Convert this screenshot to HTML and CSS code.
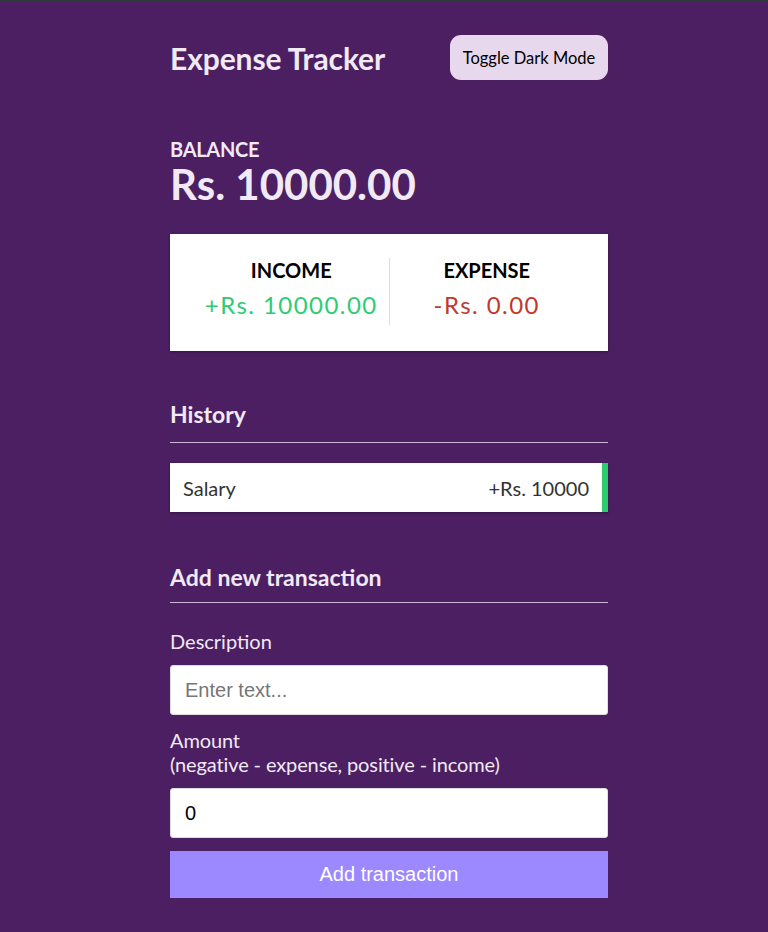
FILE: index.html
```html
<!DOCTYPE html>
<html lang="en">
<head>
<meta charset="UTF-8">
<title>Expense Tracker</title>
<link rel="stylesheet" href="styles.css">
</head>
<body>
<div class="container">
  <header class="header">
    <h2 class="title">Expense Tracker</h2>
    <button class="toggle">Toggle Dark Mode</button>
  </header>

  <h4 class="balance-label">BALANCE</h4>
  <h1 class="balance">Rs. 10000.00</h1>

  <div class="inc-exp">
    <div class="col col-left">
      <h4 class="col-title">INCOME</h4>
      <p class="money plus">+Rs. 10000.00</p>
    </div>
    <div class="col">
      <h4 class="col-title">EXPENSE</h4>
      <p class="money minus">-Rs. 0.00</p>
    </div>
  </div>

  <h3 class="section">History</h3>
  <ul class="list">
    <li class="item plus-item"><span>Salary</span><span>+Rs. 10000</span></li>
  </ul>

  <h3 class="section section-add">Add new transaction</h3>
  <form class="form">
    <div class="form-control">
      <label class="label" for="text">Description</label>
      <input class="input" type="text" id="text" placeholder="Enter text...">
    </div>
    <div class="form-control">
      <label class="label label-amount" for="amount">Amount <br>(negative - expense, positive - income)</label>
      <input class="input" type="number" id="amount" value="0">
    </div>
    <button class="btn" type="button">Add transaction</button>
  </form>
</div>
</body>
</html>
```

FILE: styles.css
```css
* {
  box-sizing: border-box;
}

body {
  margin: 0;
  padding-left: 10px;
  background: #4b1f62;
  border-top: 2px solid #2f3838;
  font-family: Lato, "Open Sans", sans-serif;
  color: #f1e9f4;
  min-height: 932px;
}

.container {
  width: 438px;
  margin: 0 auto;
  padding-top: 33px;
}

.header {
  display: flex;
  justify-content: space-between;
  align-items: center;
  height: 45px;
}

.title {
  margin: 0;
  font-size: 30px;
  font-weight: 700;
  line-height: normal;
  letter-spacing: -0.1px;
}

.toggle {
  height: 45px;
  width: 158px;
  border: none;
  border-radius: 11px;
  background: #e7d8ee;
  color: #000;
  font-family: Lato, sans-serif;
  font-size: 16.5px;
  padding: 0;
}

.balance-label {
  margin: 57px 0 0;
  font-size: 20px;
  line-height: 24px;
  font-weight: 700;
  letter-spacing: -0.3px;
}

.balance {
  margin: 0;
  font-size: 42px;
  line-height: 46px;
  font-weight: 700;
}

.inc-exp {
  margin-top: 27px;
  background: #fff;
  box-shadow: 0 1px 3px rgba(0, 0, 0, 0.12), 0 1px 2px rgba(0, 0, 0, 0.24);
  padding: 24px 24px 26px;
  display: flex;
}

.col {
  flex: 1;
  text-align: center;
  padding-bottom: 6px;
}

.col-left {
  border-right: 1px solid #dedede;
}

.col-title {
  margin: 0;
  color: #000;
  font-size: 20px;
  line-height: 24px;
  font-weight: 700;
}

.money {
  margin: 8px 0 0;
  font-size: 24px;
  line-height: normal;
  letter-spacing: 1.45px;
}

.plus {
  color: #2ecc71;
}

.minus {
  color: #c0392b;
}

.section {
  margin: 49px 0 0;
  font-size: 23px;
  font-weight: 700;
  line-height: normal;
  padding-bottom: 14px;
  border-bottom: 1px solid #cbb8d6;
}

.section-add {
  margin-top: 51px;
  padding-bottom: 11px;
}

.list {
  list-style: none;
  margin: 20px 0 0;
  padding: 0;
}

.item {
  background: #fff;
  color: #333;
  height: 49px;
  display: flex;
  justify-content: space-between;
  align-items: center;
  padding: 0 13px;
  font-size: 20px;
  box-shadow: 0 1px 3px rgba(0, 0, 0, 0.12), 0 1px 2px rgba(0, 0, 0, 0.24);
}

.plus-item {
  border-right: 6px solid #2ecc71;
}

.form {
  margin: 0;
}

.form-control {
  margin: 0;
}

.label {
  display: block;
  margin: 26px 0 12px;
  font-size: 20px;
  line-height: 24px;
}

.label-amount {
  margin: 13px 0 12px;
  letter-spacing: -0.12px;
}

.input {
  display: block;
  width: 100%;
  height: 50px;
  border: 1px solid #dedede;
  border-radius: 3px;
  background: #fff;
  padding: 0 14px;
  font-family: "Liberation Sans", Arial, sans-serif;
  font-size: 20px;
  color: #000;
}

.input::placeholder {
  color: #767676;
}

.btn {
  display: block;
  width: 100%;
  height: 47px;
  margin-top: 13px;
  border: none;
  background: #9c88ff;
  color: #fff;
  font-family: "Liberation Sans", Arial, sans-serif;
  font-size: 20px;
}
```
